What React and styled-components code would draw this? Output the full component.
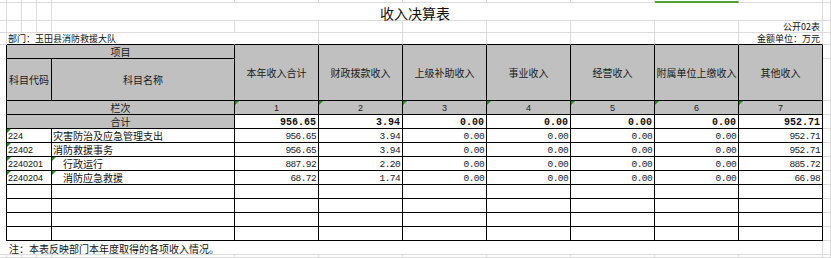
import React from "react";
import styled, { createGlobalStyle } from "styled-components";

const GRID = "#dcdcdc";
const INK = "#000";
const HEAD = "#c0c0c0";
const FLAG = "#1e8c1e";
const CJK = `"Noto Sans CJK SC", "Liberation Sans", sans-serif`;

const headers = [
  "本年收入合计",
  "财政拨款收入",
  "上级补助收入",
  "事业收入",
  "经营收入",
  "附属单位上缴收入",
  "其他收入",
];

const totals = ["956.65", "3.94", "0.00", "0.00", "0.00", "0.00", "952.71"];

const rows = [
  {
    code: "224",
    name: "灾害防治及应急管理支出",
    vals: ["956.65", "3.94", "0.00", "0.00", "0.00", "0.00", "952.71"],
  },
  {
    code: "22402",
    name: "消防救援事务",
    vals: ["956.65", "3.94", "0.00", "0.00", "0.00", "0.00", "952.71"],
  },
  {
    code: "2240201",
    name: "行政运行",
    sub: true,
    vals: ["887.92", "2.20", "0.00", "0.00", "0.00", "0.00", "885.72"],
  },
  {
    code: "2240204",
    name: "消防应急救援",
    sub: true,
    vals: ["68.72", "1.74", "0.00", "0.00", "0.00", "0.00", "66.98"],
  },
  { empty: true },
  { empty: true },
  { empty: true },
  { empty: true },
];

function App() {
  return (
    <>
      <GlobalStyle />
      <Sheet>
        {/* row 0: partial row under the column headers */}
        <Blank />
        {Array.from({ length: 11 }).map((_, i) => (
          <Blank key={i} $bottom={i === 9 ? "mark" : "grid"} />
        ))}
        <Blank />

        {/* title */}
        <Blank />
        <Blank />
        <Blank />
        <Blank />
        <Title $span={8}>收入决算表</Title>
        <Blank />

        {/* 公开02表 */}
        <Blank />
        {Array.from({ length: 10 }).map((_, i) => (
          <Blank key={i} />
        ))}
        <Caption>公开02表</Caption>
        <Blank />

        {/* department / unit */}
        <Blank />
        <Caption $span={4} $left $bottom="ink">
          部门：玉田县消防救援大队
        </Caption>
        {Array.from({ length: 6 }).map((_, i) => (
          <Blank key={i} $bottom="ink" />
        ))}
        <Caption $bottom="ink">金额单位：万元</Caption>
        <Blank />

        {/* header */}
        <Edge />
        <HeadCell $span={4}>项目</HeadCell>
        {headers.map((h) => (
          <HeadCell key={h} $rows={2}>
            {h}
          </HeadCell>
        ))}
        <Gutter />

        <Edge />
        <HeadCell $span={3}>科目代码</HeadCell>
        <HeadCell>科目名称</HeadCell>
        <Gutter />

        {/* 栏次 */}
        <Edge />
        <HeadCell $span={4}>栏次</HeadCell>
        {headers.map((h, i) => (
          <IndexCell key={h}>{i + 1}</IndexCell>
        ))}
        <Gutter />

        {/* 合计 */}
        <Edge />
        <HeadCell $span={4}>合计</HeadCell>
        {totals.map((v, i) => (
          <TotalCell key={i}>{v}</TotalCell>
        ))}
        <Gutter />

        {rows.map((r, i) => (
          <React.Fragment key={i}>
            <Edge />
            <CodeCell $flag={!r.empty}>{r.code}</CodeCell>
            <NameCell $flag={r.sub} $indent={r.sub}>
              {r.name}
            </NameCell>
            {(r.vals || Array(7).fill("")).map((v, j) => (
              <AmountCell key={j}>{v}</AmountCell>
            ))}
            <Gutter />
          </React.Fragment>
        ))}

        {/* note */}
        <Blank $right="none" />
        <Note $span={11}>注：本表反映部门本年度取得的各项收入情况。</Note>
        <Blank />

        {/* trailing partial row */}
        <Blank />
        {Array.from({ length: 11 }).map((_, i) => (
          <Blank key={i} />
        ))}
        <Blank />
      </Sheet>
    </>
  );
}

export default App;

const GlobalStyle = createGlobalStyle`
  html, body {
    margin: 0;
    background: #fff;
  }
  body {
    font-family: ${CJK};
    color: #111;
  }
`;

const Sheet = styled.div`
  display: grid;
  grid-template-columns: 7px 15px 15px 15px 183px repeat(7, 84px) 1fr;
  grid-template-rows: 3px 18px 12px 12px 14px 42px 14px 14px repeat(8, 14px) 14px 1fr;
  width: 831px;
  height: 258px;
  overflow: hidden;
  background: #fff;

  & > * {
    min-width: 0;
    box-sizing: border-box;
    white-space: nowrap;
  }
`;

const bottomColor = {
  grid: GRID,
  ink: INK,
  none: "transparent",
};

const Blank = styled.div`
  grid-column: span ${(p) => p.$span || 1};
  border-right: 1px solid ${(p) => (p.$right === "none" ? "transparent" : GRID)};
  border-bottom: ${(p) =>
    p.$bottom === "mark"
      ? "2px solid #4ea235"
      : `1px solid ${bottomColor[p.$bottom || "grid"]}`};
`;

const Title = styled.div`
  grid-column: span ${(p) => p.$span || 1};
  border-right: 1px solid ${GRID};
  border-bottom: 1px solid ${GRID};
  display: flex;
  align-items: center;
  justify-content: center;
  padding: 2px 44px 0 0;
  font-size: 14px;
  line-height: 16px;
  color: #111;
`;

const Caption = styled.div`
  grid-column: span ${(p) => p.$span || 1};
  border-right: 1px solid ${(p) => (p.$left ? "transparent" : GRID)};
  border-bottom: 1px solid ${(p) => bottomColor[p.$bottom || "grid"]};
  display: flex;
  align-items: flex-end;
  justify-content: ${(p) => (p.$left ? "flex-start" : "flex-end")};
  padding: 0 2px 0 1px;
  font-size: 9px;
  line-height: 11px;
  color: #111;
`;

const Edge = styled.div`
  border-right: 1px solid ${INK};
`;

const Gutter = styled.div`
  border-bottom: 1px solid ${GRID};
  border-right: 1px solid ${GRID};
`;

const TableCell = styled.div`
  position: relative;
  overflow: hidden;
  grid-column: span ${(p) => p.$span || 1};
  grid-row: span ${(p) => p.$rows || 1};
  border-right: 1px solid ${INK};
  border-bottom: 1px solid ${INK};
  display: flex;
  align-items: center;
  line-height: 13px;
  color: #111;

  &::before {
    content: "";
    display: ${(p) => (p.$flag ? "block" : "none")};
    position: absolute;
    top: 0;
    left: 0;
    border-top: 4px solid ${FLAG};
    border-right: 4px solid transparent;
  }
`;

const HeadCell = styled(TableCell)`
  background: ${HEAD};
  justify-content: center;
  font-size: 10px;
  color: #1a1a1a;
`;

const IndexCell = styled(TableCell).attrs({ $flag: true })`
  background: ${HEAD};
  justify-content: center;
  padding-top: 1px;
  font-family: "Liberation Sans", sans-serif;
  font-size: 9px;
  color: #222;
`;

const TotalCell = styled(TableCell)`
  justify-content: flex-end;
  padding: 1px 2px 0 0;
  font-family: "Liberation Mono", monospace;
  font-size: 10px;
  font-weight: bold;
`;

const AmountCell = styled(TableCell)`
  justify-content: flex-end;
  padding: 1px 2px 0 0;
  font-family: "Liberation Mono", monospace;
  font-size: 9.5px;
  letter-spacing: -0.6px;
  color: #1c1c1c;
`;

const CodeCell = styled(TableCell).attrs({ $span: 3 })`
  justify-content: flex-start;
  padding: 1px 0 0 1px;
  font-family: "Liberation Sans", sans-serif;
  font-size: 9px;
`;

const NameCell = styled(TableCell)`
  justify-content: flex-start;
  padding-left: ${(p) => (p.$indent ? "11px" : "1px")};
  font-size: 10px;
`;

const Note = styled.div`
  grid-column: span ${(p) => p.$span || 1};
  border-right: 1px solid ${GRID};
  border-bottom: 1px solid ${GRID};
  display: flex;
  align-items: center;
  padding: 1px 0 0 2px;
  font-size: 10px;
  line-height: 13px;
  color: #111;
`;
